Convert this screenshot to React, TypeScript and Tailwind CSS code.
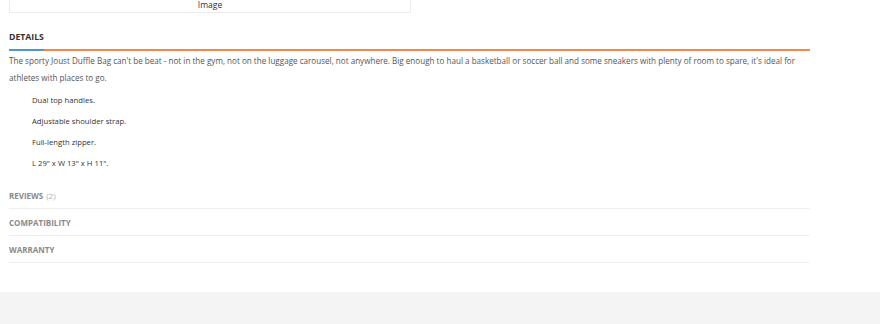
import React from 'react';

const features = [
  'Dual top handles.',
  'Adjustable shoulder strap.',
  'Full-length zipper.',
  'L 29" x W 13" x H 11".',
];

const tabs = [
  { title: 'Reviews', count: 2 },
  { title: 'Compatibility' },
  { title: 'Warranty' },
];

export default function App() {
  return (
    <div className="min-h-screen bg-white" style={{ fontFamily: '"Open Sans", sans-serif' }}>
      <div className="h-[292px] overflow-hidden px-[9px]">
        {/* Image placeholder */}
        <div className="-mt-[10px] flex h-[23px] w-[402px] items-end justify-center border border-[#ececec] pb-[2px] text-[8.5px] leading-[10px] text-[#333]">
          Image
        </div>

        <div className="w-[801px]">
          {/* Details tab */}
          <div className="mt-[19px] flex border-b-2 border-[#f3884a]">
            <div className="-mb-[2px] border-b-2 border-[#4f96cf] pb-[7px] text-[8.7px] font-bold uppercase leading-[10px] text-[#333]">
              Details
            </div>
          </div>

          <p className="mt-[1px] text-[8.1px] leading-[17px] text-[#555]">
            The sporty Joust Duffle Bag can't be beat - not in the gym, not on the luggage carousel, not
            anywhere. Big enough to haul a basketball or soccer ball and some sneakers with plenty of room to
            spare, it's ideal for athletes with places to go.
          </p>

          <ul className="mt-[4px] pl-[23px]">
            {features.map((f) => (
              <li key={f} className="text-[7.7px] leading-[21px] text-[#333]">
                {f}
              </li>
            ))}
          </ul>

          {/* Other tabs */}
          <div className="mt-[8px]">
            {tabs.map((t) => (
              <div
                key={t.title}
                className="flex h-[27px] items-center border-b border-[#efefef] pt-[2px] text-[8px] font-bold uppercase text-[#8a8a8a]"
              >
                {t.title}
                {t.count !== undefined && (
                  <span className="ml-[3px] font-normal text-[#b0b0b0]">({t.count})</span>
                )}
              </div>
            ))}
          </div>
        </div>
      </div>

      {/* Footer */}
      <div className="h-[32px] bg-[#f4f4f4]" />
    </div>
  );
}
